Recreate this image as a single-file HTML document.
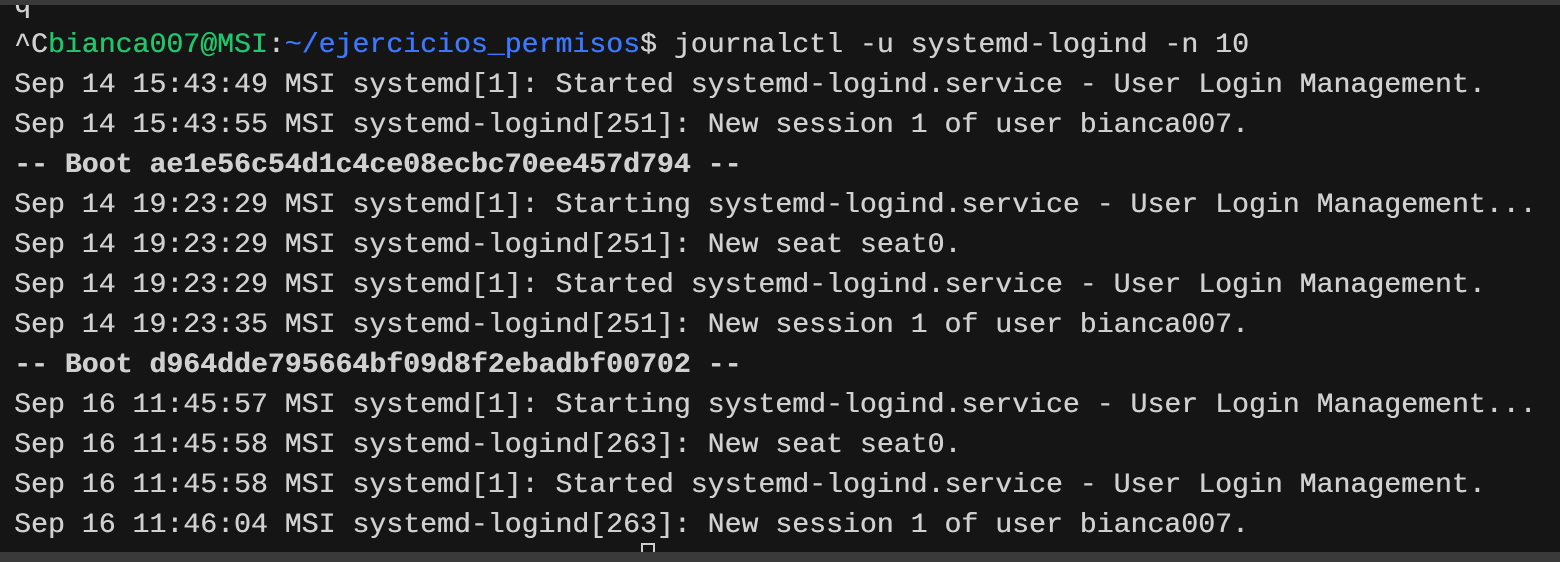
<!DOCTYPE html>
<html><head><meta charset="utf-8"><style>
html,body{margin:0;padding:0}
body{width:1560px;height:562px;background:#151515;position:relative;overflow:hidden}
.top{position:absolute;left:0;top:0;width:1560px;height:5px;background:#3a3a3a}
.bot{position:absolute;left:0;top:552px;width:1560px;height:10px;background:#3a3a3a}
pre{position:absolute;left:14px;top:-14px;margin:0;font-family:"Liberation Mono",monospace;font-size:28.2px;line-height:40px;color:#d0d0d0;white-space:pre;text-shadow:0.4px 0 0 #d0d0d0}
.g{color:#1fc66a;text-shadow:0.4px 0 0 #1fc66a}.b{color:#3b78ff;text-shadow:0.4px 0 0 #3b78ff}
.bd{font-weight:bold}
.cur{position:absolute;left:641px;top:543px;width:14px;height:14px;border:2px solid #ccc;border-bottom:none;box-sizing:border-box}
</style></head><body>
<pre>q
^C<span class="g">bianca007@MSI</span>:<span class="b">~/ejercicios_permisos</span>$ journalctl -u systemd-logind -n 10
Sep 14 15:43:49 MSI systemd[1]: Started systemd-logind.service - User Login Management.
Sep 14 15:43:55 MSI systemd-logind[251]: New session 1 of user bianca007.
<span class="bd">-- Boot ae1e56c54d1c4ce08ecbc70ee457d794 --</span>
Sep 14 19:23:29 MSI systemd[1]: Starting systemd-logind.service - User Login Management...
Sep 14 19:23:29 MSI systemd-logind[251]: New seat seat0.
Sep 14 19:23:29 MSI systemd[1]: Started systemd-logind.service - User Login Management.
Sep 14 19:23:35 MSI systemd-logind[251]: New session 1 of user bianca007.
<span class="bd">-- Boot d964dde795664bf09d8f2ebadbf00702 --</span>
Sep 16 11:45:57 MSI systemd[1]: Starting systemd-logind.service - User Login Management...
Sep 16 11:45:58 MSI systemd-logind[263]: New seat seat0.
Sep 16 11:45:58 MSI systemd[1]: Started systemd-logind.service - User Login Management.
Sep 16 11:46:04 MSI systemd-logind[263]: New session 1 of user bianca007.</pre>
<div class="cur"></div>
<div class="top"></div><div class="bot"></div>
</body></html>
